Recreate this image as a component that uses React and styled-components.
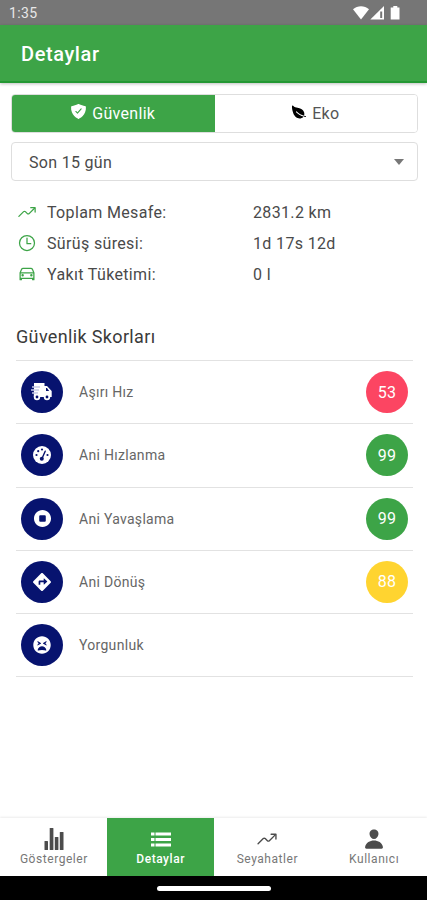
import { useState } from "react";
import styled, { createGlobalStyle } from "styled-components";
import { IoShieldCheckmark, IoLeaf, IoTrendingUp, IoTimeOutline, IoCarOutline, IoStopCircle, IoPerson } from "react-icons/io5";
import { FaDirections, FaTired } from "react-icons/fa";

const summary = [
    { icon: <IoTrendingUp />, label: "Toplam Mesafe:", value: "2831.2 km" },
    { icon: <IoTimeOutline />, label: "Sürüş süresi:", value: "1d 17s 12d" },
    { icon: <IoCarOutline />, label: "Yakıt Tüketimi:", value: "0 l" },
];

const scores = [
    { icon: <TruckIcon />, label: "Aşırı Hız", score: 53, color: "#fc4562" },
    { icon: <GaugeIcon />, label: "Ani Hızlanma", score: 99, color: "#3da447" },
    { icon: <IoStopCircle size={21} />, label: "Ani Yavaşlama", score: 99, color: "#3da447" },
    { icon: <FaDirections />, label: "Ani Dönüş", score: 88, color: "#ffd430" },
    { icon: <FaTired />, label: "Yorgunluk" },
];

export default function App() {
    const [tab, setTab] = useState("safety");
    const [page, setPage] = useState("Detaylar");

    const pages = [
        { name: "Göstergeler", icon: <StatsIcon /> },
        { name: "Detaylar", icon: <ListIcon /> },
        { name: "Seyahatler", icon: <IoTrendingUp size={22} /> },
        { name: "Kullanıcı", icon: <IoPerson size={22} /> },
    ];

    return (
        <Screen>
            <GlobalStyle />
            <StatusBar>
                <span>1:35</span>
                <StatusIcons />
            </StatusBar>
            <Header>Detaylar</Header>
            <Main>
                <Tabs>
                    <Tab type="button" $active={tab === "safety"} onClick={() => setTab("safety")}>
                        <IoShieldCheckmark size={17} />
                        <span>Güvenlik</span>
                    </Tab>
                    <Tab type="button" $active={tab === "eco"} onClick={() => setTab("eco")}>
                        <IoLeaf size={16} />
                        <span>Eko</span>
                    </Tab>
                </Tabs>
                <Period type="button">
                    <span>Son 15 gün</span>
                    <Caret />
                </Period>
                <Summary>
                    {summary.map((item) => (
                        <SummaryRow key={item.label}>
                            {item.icon}
                            <dt>{item.label}</dt>
                            <dd>{item.value}</dd>
                        </SummaryRow>
                    ))}
                </Summary>
                <Title>Güvenlik Skorları</Title>
                <List>
                    {scores.map((item) => (
                        <Row key={item.label}>
                            <RowIcon>{item.icon}</RowIcon>
                            <RowLabel>{item.label}</RowLabel>
                            {item.score && <Score $color={item.color}>{item.score}</Score>}
                        </Row>
                    ))}
                </List>
            </Main>
            <Nav>
                {pages.map((item) => (
                    <NavItem key={item.name} type="button" $active={page === item.name} onClick={() => setPage(item.name)}>
                        <NavIcon>{item.icon}</NavIcon>
                        <span>{item.name}</span>
                    </NavItem>
                ))}
            </Nav>
            <HomeBar>
                <Pill />
            </HomeBar>
        </Screen>
    );
}

function StatusIcons() {
    return (
        <svg width="48" height="16" viewBox="0 0 48 16" fill="#fff">
            <path d="M0 4.2C4.5 .2 11.5 .2 16 4.2L8 14.4z" />
            <path d="M31 1v13.5H17.3z" />
            <path d="M27.2 6.5h2v6.5h-2z" fill="#767676" />
            <path d="M40.3 1h4v1.5h2.2v12h-8.8v-12h2.6z" />
        </svg>
    );
}

function TruckIcon() {
    return (
        <svg width="22" height="20" viewBox="0 0 22 20">
            <path d="M3 1h10.5v3H16l4.7 5v6H2.8z" fill="#fff" />
            <path d="M1 5h8M0 8h8M1 11h6" stroke="#c5c9e6" strokeWidth="1.4" />
            <path d="M15 6h1l2.2 3H15z" fill="#07136f" />
            <circle cx="6" cy="15" r="2.3" fill="#07136f" stroke="#fff" strokeWidth="1.8" />
            <circle cx="16" cy="15" r="2.3" fill="#07136f" stroke="#fff" strokeWidth="1.8" />
        </svg>
    );
}

function GaugeIcon() {
    return (
        <svg width="18" height="18" viewBox="0 0 18 18" fill="#07136f">
            <circle cx="9" cy="9" r="9" fill="#fff" />
            <circle cx="3.5" cy="9" r="1.1" />
            <circle cx="5.2" cy="5.2" r="1.1" />
            <circle cx="9" cy="3.5" r="1.1" />
            <circle cx="14.5" cy="9" r="1.1" />
            <circle cx="8.8" cy="12.8" r="2" />
            <path d="M9 12.5l3.2-7.3" stroke="#07136f" strokeWidth="1.4" strokeLinecap="round" />
        </svg>
    );
}

function StatsIcon() {
    return (
        <svg width="20" height="22" viewBox="0 0 20 22" fill="currentColor">
            <rect x="0.5" y="13" width="3.5" height="9" rx="0.5" />
            <rect x="5.7" y="0" width="3.7" height="22" rx="0.5" />
            <rect x="10.8" y="9" width="3.6" height="13" rx="0.5" />
            <rect x="15.8" y="4" width="3.7" height="18" rx="0.5" />
        </svg>
    );
}

function ListIcon() {
    return (
        <svg width="20" height="15" viewBox="0 0 20 15" fill="currentColor">
            <path d="M0 .5h3.5v3H0zM4.5 .5H20v3H4.5z" />
            <path d="M0 6h3.5v3H0zM4.5 6H20v3H4.5z" />
            <path d="M0 11.5h3.5v3H0zM4.5 11.5H20v3H4.5z" />
        </svg>
    );
}

const GlobalStyle = createGlobalStyle`
    * {
        box-sizing: border-box;
    }
    body {
        margin: 0;
        background: #fff;
        font-family: Roboto, sans-serif;
    }
    button {
        font-family: inherit;
        cursor: pointer;
    }
    svg {
        flex-shrink: 0;
    }
`;

const Screen = styled.div`
    width: 427px;
    height: 900px;
    display: flex;
    flex-direction: column;
    overflow: hidden;
    background: #fff;
`;

const StatusBar = styled.div`
    height: 25px;
    display: flex;
    align-items: center;
    justify-content: space-between;
    padding: 1px 26px 0 9px;
    background: #767676;
    color: #e8e8e8;
    font-size: 14px;
    letter-spacing: 0.4px;
`;

const Header = styled.header`
    height: 58px;
    display: flex;
    align-items: center;
    padding: 2px 0 0 21px;
    background: #3da447;
    border-bottom: 2px solid #249833;
    box-shadow: 0 1px 3px rgba(0, 0, 0, 0.25);
    color: #fff;
    font-size: 20px;
    font-weight: 500;
    letter-spacing: 0.6px;
`;

const Main = styled.main`
    flex: 1;
    padding: 11px 9px 0 11px;
`;

const Tabs = styled.div`
    height: 39px;
    display: flex;
    border: 1px solid #dedede;
    border-radius: 4px;
    overflow: hidden;
`;

const Tab = styled.button`
    flex: 1;
    display: flex;
    align-items: center;
    justify-content: center;
    gap: 5px;
    padding: 0 1px 0 0;
    border: none;
    background: ${(props) => (props.$active ? "#3da447" : "#fff")};
    color: ${(props) => (props.$active ? "#fff" : "#555")};
    font-size: 16px;
    letter-spacing: 0.3px;
    svg {
        color: ${(props) => (props.$active ? "#fff" : "#000")};
        margin-bottom: 4px;
    }
`;

const Period = styled.button`
    width: 100%;
    height: 39px;
    margin-top: 9px;
    padding: 1px 13px 0 17px;
    display: flex;
    align-items: center;
    justify-content: space-between;
    background: #fff;
    border: 1px solid #dedede;
    border-radius: 4px;
    color: #4a4a4a;
    font-size: 16px;
    letter-spacing: 0.3px;
`;

const Caret = styled.i`
    border: 5px solid transparent;
    border-top: 6px solid #777;
    border-bottom: none;
`;

const Summary = styled.dl`
    margin: 15px 0 0 6px;
`;

const SummaryRow = styled.div`
    height: 31px;
    display: grid;
    grid-template-columns: 30px 206px 1fr;
    align-items: center;
    color: #4a4a4a;
    font-size: 16px;
    letter-spacing: 0.35px;
    svg {
        width: 20px;
        height: 20px;
        color: #3da447;
    }
    dt,
    dd {
        margin: 0;
        padding-top: 1px;
    }
`;

const Title = styled.h2`
    height: 71px;
    margin: 0 0 0 5px;
    padding-top: 36px;
    font-size: 18px;
    line-height: 24px;
    font-weight: 400;
    letter-spacing: 0.35px;
    color: #3a3a3a;
`;

const List = styled.ul`
    list-style: none;
    margin: 0 0 0 5px;
    width: 397px;
    padding: 0;
    border-top: 1px solid #e2e2e2;
`;

const Row = styled.li`
    height: 63.25px;
    display: flex;
    align-items: center;
    padding: 0 5px;
    border-bottom: 1px solid #e2e2e2;
`;

const RowIcon = styled.div`
    width: 42px;
    height: 42px;
    display: flex;
    align-items: center;
    justify-content: center;
    border-radius: 50%;
    background: #07136f;
    color: #fff;
    font-size: 18px;
`;

const RowLabel = styled.span`
    flex: 1;
    margin-left: 16px;
    color: #666;
    font-size: 14px;
    letter-spacing: 0.3px;
`;

const Score = styled.div`
    width: 42px;
    height: 42px;
    display: flex;
    align-items: center;
    justify-content: center;
    border-radius: 50%;
    background: ${(props) => props.$color};
    color: #fff;
    font-size: 16px;
    letter-spacing: 0.3px;
`;

const Nav = styled.nav`
    height: 58px;
    display: flex;
    box-shadow: 0 -1px 2px rgba(0, 0, 0, 0.08);
`;

const NavItem = styled.button`
    flex: 1;
    display: flex;
    flex-direction: column;
    align-items: center;
    padding: 9px 0 0 1px;
    border: none;
    background: ${(props) => (props.$active ? "#3da447" : "#fff")};
    color: ${(props) => (props.$active ? "#fff" : "#777")};
    font-size: 12px;
    font-weight: ${(props) => (props.$active ? 500 : 400)};
    line-height: 17px;
    letter-spacing: 0.55px;
    svg {
        color: ${(props) => (props.$active ? "#fff" : "#4c4c4c")};
    }
`;

const NavIcon = styled.span`
    height: 24px;
    display: flex;
    align-items: center;
`;

const HomeBar = styled.div`
    height: 24px;
    display: flex;
    align-items: center;
    justify-content: center;
    background: #000;
`;

const Pill = styled.div`
    width: 114px;
    height: 5px;
    border-radius: 3px;
    background: #fff;
`;
